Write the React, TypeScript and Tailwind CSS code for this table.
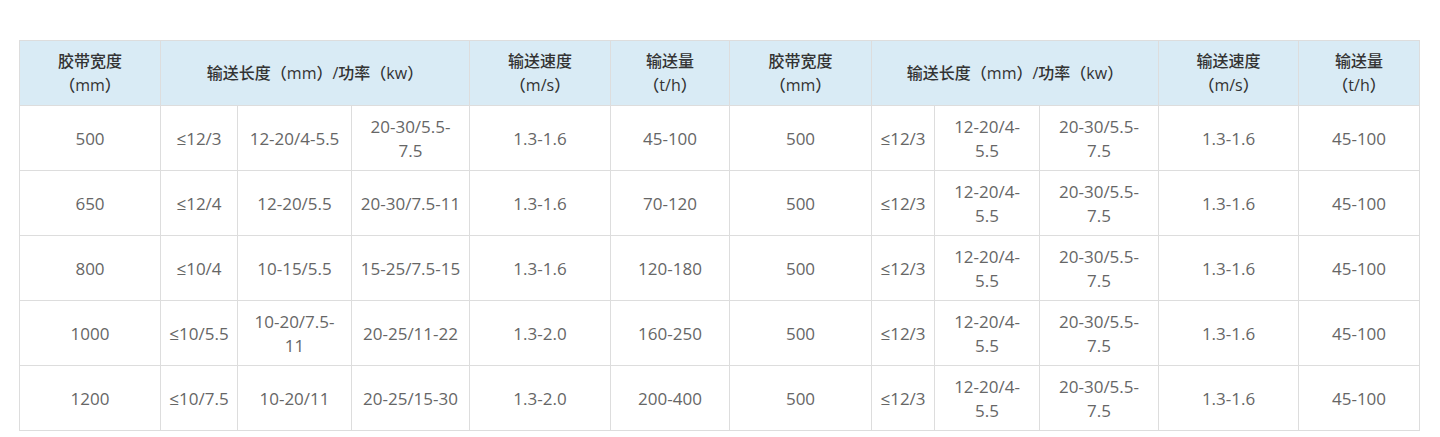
const widths = [141, 77, 114, 118, 141, 119, 142, 63, 105, 119, 140, 121];

type Cell = string | string[];

const rows: Cell[][] = [
  ["500", "≤12/3", "12-20/4-5.5", ["20-30/5.5-", "7.5"], "1.3-1.6", "45-100", "500", "≤12/3", ["12-20/4-", "5.5"], ["20-30/5.5-", "7.5"], "1.3-1.6", "45-100"],
  ["650", "≤12/4", "12-20/5.5", "20-30/7.5-11", "1.3-1.6", "70-120", "500", "≤12/3", ["12-20/4-", "5.5"], ["20-30/5.5-", "7.5"], "1.3-1.6", "45-100"],
  ["800", "≤10/4", "10-15/5.5", "15-25/7.5-15", "1.3-1.6", "120-180", "500", "≤12/3", ["12-20/4-", "5.5"], ["20-30/5.5-", "7.5"], "1.3-1.6", "45-100"],
  ["1000", "≤10/5.5", ["10-20/7.5-", "11"], "20-25/11-22", "1.3-2.0", "160-250", "500", "≤12/3", ["12-20/4-", "5.5"], ["20-30/5.5-", "7.5"], "1.3-1.6", "45-100"],
  ["1200", "≤10/7.5", "10-20/11", "20-25/15-30", "1.3-2.0", "200-400", "500", "≤12/3", ["12-20/4-", "5.5"], ["20-30/5.5-", "7.5"], "1.3-1.6", "45-100"],
];

function Lines({ value }: { value: Cell }) {
  if (typeof value === "string") return <>{value}</>;
  return (
    <>
      {value.map((line, i) => (
        <span key={i} className="block">
          {line}
        </span>
      ))}
    </>
  );
}

function HeadCell({ top, bottom, span }: { top: string; bottom?: string; span?: number }) {
  return (
    <th
      colSpan={span}
      className="border border-[#dddddd] px-2 text-center align-middle text-[16px] font-medium leading-[24px] text-[#333333]"
    >
      <span className="block">{top}</span>
      {bottom && <span className="block">{bottom}</span>}
    </th>
  );
}

export default function App() {
  return (
    <div
      className="min-h-[437px] bg-white pl-[19px] pt-[40px]"
      style={{ fontFamily: '"Open Sans", "Noto Sans CJK SC", sans-serif' }}
    >
      <table className="w-[1400px] table-fixed border-collapse">
        <colgroup>
          {widths.map((w, i) => (
            <col key={i} style={{ width: w }} />
          ))}
        </colgroup>
        <thead>
          <tr className="h-[65px] bg-[#d9ebf5]">
            <HeadCell top="胶带宽度" bottom="（mm）" />
            <HeadCell top="输送长度（mm）/功率（kw）" span={3} />
            <HeadCell top="输送速度" bottom="（m/s）" />
            <HeadCell top="输送量" bottom="（t/h）" />
            <HeadCell top="胶带宽度" bottom="（mm）" />
            <HeadCell top="输送长度（mm）/功率（kw）" span={3} />
            <HeadCell top="输送速度" bottom="（m/s）" />
            <HeadCell top="输送量" bottom="（t/h）" />
          </tr>
        </thead>
        <tbody>
          {rows.map((row, r) => (
            <tr key={r} className="h-[65px]">
              {row.map((cell, c) => (
                <td
                  key={c}
                  className="whitespace-nowrap border border-[#dddddd] px-1 pt-[2px] text-center align-middle text-[17px] leading-[24px] text-[#666666]"
                >
                  <Lines value={cell} />
                </td>
              ))}
            </tr>
          ))}
        </tbody>
      </table>
    </div>
  );
}
